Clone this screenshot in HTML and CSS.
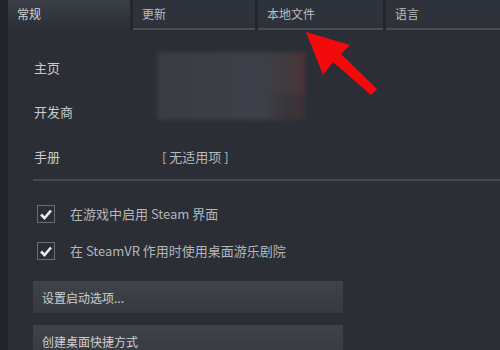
FILE: index.html
```html
<!DOCTYPE html>
<html lang="zh-CN">
<head>
  <meta charset="UTF-8">
  <title>属性</title>
  <link rel="stylesheet" href="styles.css">
</head>
<body>
  <div class="window">
    <div class="edge"></div>
    <div class="main">
      <div class="tabs">
        <div class="tab active">常规</div>
        <div class="tab">更新</div>
        <div class="tab">本地文件</div>
        <div class="tab">语言</div>
      </div>

      <div class="content">
        <div class="fields">
          <span class="label">主页</span>
          <div class="logo"></div>
          <span class="label">开发商</span>
          <span class="label">手册</span>
          <span class="value">[ 无适用项 ]</span>
        </div>

        <div class="divider"></div>

        <ul class="checks">
          <li>
            <span class="box">
              <svg viewBox="0 0 18 18" width="18" height="18"><path d="M4 9.5 L7.5 13 L14 5.5" fill="none" stroke="#ececec" stroke-width="2.6"/></svg>
            </span>
            在游戏中启用 Steam 界面
          </li>
          <li>
            <span class="box">
              <svg viewBox="0 0 18 18" width="18" height="18"><path d="M4 9.5 L7.5 13 L14 5.5" fill="none" stroke="#ececec" stroke-width="2.6"/></svg>
            </span>
            在 SteamVR 作用时使用桌面游乐剧院
          </li>
        </ul>

        <div class="buttons">
          <button>设置启动选项...</button>
          <button>创建桌面快捷方式</button>
        </div>
      </div>
    </div>
  </div>

  <!-- annotation arrow -->
  <svg class="arrow" width="500" height="350" viewBox="0 0 500 350">
    <polygon points="306,32 350,45 341,54 377,89 371,95 333,62 323,75" fill="#f40a0a"/>
  </svg>
</body>
</html>
```

FILE: styles.css
```css
body {
  margin: 0;
  width: 500px;
  height: 350px;
  overflow: hidden;
  background-color: #2a2d34;
  font-family: "Noto Sans CJK SC", "Liberation Sans", sans-serif;
  color: #c5c8cc;
  position: relative;
}

.window {
  display: flex;
  height: 350px;
}

.edge {
  width: 8px;
  background-color: #212429;
}

.main {
  flex: 1;
  background-color: #2b2e35;
}

.tabs {
  display: grid;
  grid-template-columns: 122px 122px 125px 1fr;
  column-gap: 3px;
  background-color: #23262b;
  height: 30px;
}

.tab {
  font-size: 12px;
  line-height: 28px;
  padding-left: 9px;
  color: #b9bcc0;
  background-color: #2e323a;
  border-bottom: 2px solid #474c55;
}

.tab.active {
  color: #d0d3d6;
  border-bottom: none;
  background: linear-gradient(#3a3e46, #2b2e35);
}

.content {
  padding: 15px 0 0 25px;
}

.fields {
  display: grid;
  grid-template-columns: 124px 1fr;
  grid-template-rows: 44px 44px 46px;
  align-items: center;
  font-size: 13px;
}

.label {
  padding-left: 1px;
  color: #c8cbcf;
}

.logo {
  grid-column: 2;
  grid-row: 1 / span 2;
  align-self: start;
  margin-top: 7px;
  width: 148px;
  height: 68px;
  background:
    linear-gradient(90deg, rgba(43, 46, 53, 0) 40%, rgba(43, 46, 53, 0) 70%, rgba(43, 46, 53, 0.5) 100%) bottom / 100% 40% no-repeat,
    linear-gradient(90deg, #393c43 0%, #3d4149 70%, #41393d 90%, #4e3336 100%);
  filter: blur(2px);
}

.fields .label:nth-of-type(2) {
  grid-row: 2;
}

.value {
  color: #b6b9bd;
  padding-left: 5px;
}

.divider {
  height: 2px;
  background-color: #434852;
  margin-top: 0;
}

.checks {
  list-style: none;
  margin: 14px 0 0;
  padding: 0;
}

.checks li {
  display: flex;
  align-items: center;
  gap: 15px;
  height: 37px;
  font-size: 13px;
  color: #b3b6ba;
  padding-left: 4px;
}

.box {
  width: 18px;
  height: 18px;
  border: 1px solid #6a6e74;
  box-sizing: border-box;
  display: flex;
  align-items: center;
  justify-content: center;
}

.box svg {
  flex: none;
}

.buttons {
  display: flex;
  flex-direction: column;
  gap: 12px;
  margin-top: 12px;
}

button {
  width: 310px;
  height: 32px;
  text-align: left;
  padding: 0 9px;
  font-family: inherit;
  font-size: 12px;
  color: #cdd0d3;
  border: none;
  background: linear-gradient(#3f434a, #363940);
}

.arrow {
  position: absolute;
  top: 0;
  left: 0;
}
```
